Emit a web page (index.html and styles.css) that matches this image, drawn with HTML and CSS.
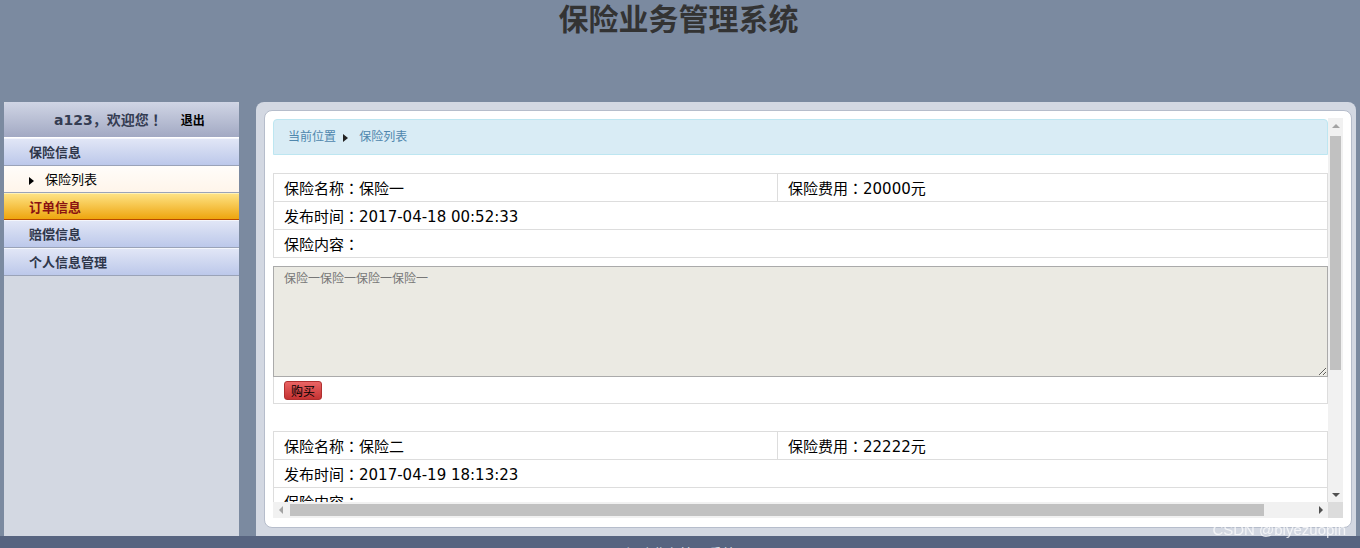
FILE: index.html
```html
<!DOCTYPE html>
<html lang="zh-CN">
<head>
    <meta charset="UTF-8">
    <title>保险业务管理系统</title>
    <link rel="stylesheet" href="styles.css">
</head>
<body>
    <div class="header">
        <h1>保险业务管理系统</h1>
    </div>
    <div class="layout">
        <div class="sidebar">
            <div class="user"><span class="hello">a123<span class="punct">，</span>欢迎您<span class="punct">！</span></span><a class="logout">退出</a></div>
            <ul class="menu">
                <li class="group">保险信息</li>
                <li class="sub"><span class="arrow"></span>保险列表</li>
                <li class="group active">订单信息</li>
                <li class="group">赔偿信息</li>
                <li class="group">个人信息管理</li>
            </ul>
        </div>
        <div class="main">
            <div class="panel">
                <div class="frame">
                    <div class="view">
                        <div class="crumb">当前位置 <span class="crumb-arrow"></span> 保险列表</div>

                        <div class="item">
                            <table class="info">
                                <tr><td class="half">保险名称<span class="punct">：</span>保险一</td><td>保险费用<span class="punct">：</span>20000元</td></tr>
                                <tr><td colspan="2">发布时间<span class="punct">：</span>2017-04-18 00:52:33</td></tr>
                                <tr><td colspan="2">保险内容<span class="punct">：</span></td></tr>
                            </table>
                            <textarea class="content" readonly>保险一保险一保险一保险一</textarea>
                            <div class="buy-row"><button class="buy">购买</button></div>
                        </div>

                        <div class="item">
                            <table class="info">
                                <tr><td class="half">保险名称<span class="punct">：</span>保险二</td><td>保险费用<span class="punct">：</span>22222元</td></tr>
                                <tr><td colspan="2">发布时间<span class="punct">：</span>2017-04-19 18:13:23</td></tr>
                                <tr><td colspan="2">保险内容<span class="punct">：</span></td></tr>
                            </table>
                            <textarea class="content" readonly>保险二保险二保险二</textarea>
                            <div class="buy-row"><button class="buy">购买</button></div>
                        </div>
                    </div>
                    <!-- fake scrollbars, the screenshot browser draws none -->
                    <div class="vbar">
                        <div class="sbtn"><span class="tri up"></span></div>
                        <div class="vtrack"><div class="vthumb"></div></div>
                        <div class="sbtn"><span class="tri down"></span></div>
                    </div>
                    <div class="hbar">
                        <div class="sbtn"><span class="tri left"></span></div>
                        <div class="htrack"><div class="hthumb"></div></div>
                        <div class="sbtn"><span class="tri right"></span></div>
                    </div>
                    <div class="corner"></div>
                </div>
            </div>
        </div>
    </div>
    <div class="footer">保险业务管理系统</div>
    <div class="mark">CSDN @biyezuopin</div>
</body>
</html>
```

FILE: styles.css
```css
body {
    margin: 0;
    height: 548px;
    overflow: hidden;
    background-color: #7b8aa0;
    font-family: "Noto Sans", "Noto Sans CJK SC", sans-serif;
}
.punct {
    font-family: "Noto Sans CJK JP", sans-serif;
    font-feature-settings: "locl" 0;
}
.header {
    height: 102px;
}
.header h1 {
    margin: 0;
    font-size: 30px;
    line-height: 34px;
    text-align: center;
    color: #333;
    font-family: "Noto Sans CJK SC", sans-serif;
    font-weight: bold;
    padding-right: 3px;
}
.layout {
    display: flex;
    gap: 17px;
    height: 434px;
    padding-left: 4px;
}
.sidebar {
    width: 235px;
    background-color: #d3d8e2;
}
.user {
    height: 35px;
    line-height: 35px;
    border-radius: 5px 5px 0 0;
    background: linear-gradient(#d0d5e5, #a2a9c3);
    border-bottom: 1px solid #fff;
    font-family: "DejaVu Sans", "Noto Sans CJK SC", sans-serif;
    font-size: 14px;
    font-weight: bold;
    color: #343c52;
    padding-left: 50px;
}
.logout {
    margin-left: 18px;
    font-family: "Noto Sans CJK SC", sans-serif;
    font-size: 12px;
    color: #000;
}
.menu {
    list-style: none;
    margin: 0;
    padding: 0;
}
.menu li {
    height: 26px;
    line-height: 26px;
    font-size: 13px;
    padding-left: 25px;
    border-bottom: 1px solid #9aa3b8;
}
.menu li.group {
    background: linear-gradient(#e1e6f6, #bcc8ea);
    border-top: 1px solid #f4f6fc;
    font-weight: bold;
    color: #2f374b;
}
.menu li.sub {
    background: linear-gradient(#fffdfa, #fff5ea);
    color: #000;
}
.arrow {
    display: inline-block;
    width: 0;
    height: 0;
    border-top: 4px solid transparent;
    border-bottom: 4px solid transparent;
    border-left: 5px solid #000;
    margin-right: 11px;
    vertical-align: -1px;
}
.menu li.active {
    background: linear-gradient(#fee283, #eea50e);
    color: #8a1212;
    border-top-color: #fff2b8;
    border-bottom-color: #b84a00;
    height: 25px;
}
.main {
    width: 1092px;
    background-color: #d3d8e2;
    border-radius: 8px 8px 0 0;
    padding: 8px 4px 9px 4px;
}
.panel {
    height: 401px;
    background-color: #fff;
    border: 1px solid #b6bdcb;
    border-radius: 8px;
    padding: 7px 8px 8px 8px;
    margin-left: 4px;
}
.frame {
    display: grid;
    grid-template-columns: 1fr 15px;
    grid-template-rows: 384px 16px;
    height: 400px;
}
.view {
    overflow: hidden;
}
.crumb {
    margin-top: 1px;
    height: 34px;
    line-height: 34px;
    background-color: #d9ecf5;
    border: 1px solid #bde6f1;
    border-radius: 4px 4px 0 0;
    padding-left: 14px;
    font-size: 12px;
    color: #4f87ad;
}
.crumb-arrow {
    display: inline-block;
    width: 0;
    height: 0;
    border-top: 4px solid transparent;
    border-bottom: 4px solid transparent;
    border-left: 5px solid #222;
    margin: 0 8px 0 4px;
    vertical-align: -1px;
}
.item {
    margin-top: 18px;
    margin-bottom: 27px;
}
.info {
    width: 100%;
    border-collapse: collapse;
}
.info td {
    border: 1px solid #ddd;
    height: 27px;
    padding: 0 10px;
    font-family: "DejaVu Sans", "Noto Sans CJK SC", sans-serif;
    font-size: 15px;
    color: #000;
}
.info td.half {
    width: 483px;
}
.content {
    display: block;
    box-sizing: border-box;
    width: 100%;
    height: 111px;
    margin-top: 8px;
    padding: 2px 10px;
    background-color: #ebeae3;
    border: 1px solid #aaa;
    font-family: "Noto Sans CJK SC", sans-serif;
    font-size: 12px;
    color: #777;
    resize: both;
}
.buy-row {
    height: 26px;
    border: 1px solid #ddd;
    border-top: none;
    padding-left: 10px;
}
.buy {
    margin-top: 4px;
    width: 38px;
    height: 19px;
    padding: 0;
    border: 1px solid #b03030;
    border-radius: 3px;
    background: linear-gradient(#ea6464, #c53232);
    font-family: "Noto Sans CJK SC", sans-serif;
    font-size: 12px;
    line-height: 17px;
    color: #000;
}
.vbar, .hbar {
    display: flex;
    background-color: #f1f1f1;
}
.vbar {
    flex-direction: column;
}
.sbtn {
    flex: 0 0 15px;
    height: 15px;
    display: flex;
    align-items: center;
    justify-content: center;
}
.hbar .sbtn {
    height: 16px;
}
.vtrack, .htrack {
    flex: 1;
}
.vthumb {
    margin: 3px 2px 0 2px;
    height: 234px;
    background-color: #c1c1c1;
}
.hthumb {
    margin: 2px 0 0 2px;
    width: 974px;
    height: 12px;
    background-color: #c1c1c1;
}
.tri {
    width: 0;
    height: 0;
    border: 4px solid transparent;
}
.tri.up {
    border-bottom-color: #a3a3a3;
    border-top-width: 0;
}
.tri.down {
    border-top-color: #505050;
    border-bottom-width: 0;
}
.tri.left {
    border-right-color: #a3a3a3;
    border-left-width: 0;
}
.tri.right {
    border-left-color: #505050;
    border-right-width: 0;
}
.corner {
    background-color: #dcdcdc;
}
.footer {
    height: 40px;
    background-color: #576480;
    text-align: center;
    color: #dfe3ec;
    font-size: 14px;
    padding-top: 7px;
}
.mark {
    position: fixed;
    right: 14px;
    bottom: 10px;
    font-family: "Liberation Sans", sans-serif;
    font-size: 15px;
    color: rgba(255, 255, 255, 0.75);
}
```
